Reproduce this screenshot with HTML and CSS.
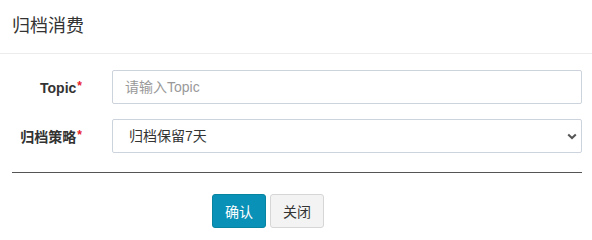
FILE: index.html
```html
<!DOCTYPE html>
<html lang="zh-CN">
<head>
<meta charset="utf-8">
<title>归档消费</title>
<link rel="stylesheet" href="styles.css">
</head>
<body>
<div class="dialog">
  <div class="dialog-header">
    <h3 class="dialog-title">归档消费</h3>
  </div>
  <form class="dialog-body">
    <div class="form-row">
      <label class="form-label">Topic<span class="req">*</span></label>
      <input class="form-control" type="text" placeholder="请输入Topic">
    </div>
    <div class="form-row">
      <label class="form-label">归档策略<span class="req">*</span></label>
      <div class="select-wrap">
        <select class="form-control form-select">
          <option>归档保留7天</option>
        </select>
        <svg class="select-arrow" width="10" height="7" viewBox="0 0 10 7"><path d="M1.2 1.4 L5 5 L8.8 1.4" fill="none" stroke="#555" stroke-width="2"/></svg>
      </div>
    </div>
    <div class="divider"></div>
    <div class="actions">
      <button type="button" class="btn btn-primary">确认</button>
      <button type="button" class="btn btn-default">关闭</button>
    </div>
  </form>
</div>
</body>
</html>
```
FILE: styles.css
```css
* { box-sizing: border-box; }
html, body { margin: 0; padding: 0; background: #fff; }
body {
  font-family: "Liberation Sans", "Noto Sans CJK SC", sans-serif;
  font-size: 14px;
  color: #333;
}
.dialog { width: 592px; }
.dialog-header {
  height: 54px;
  padding: 0 12px;
  display: flex;
  align-items: center;
  border-bottom: 1px solid #ececec;
}
.dialog-title {
  margin: 0;
  font-size: 18px;
  font-weight: normal;
  color: #333;
  line-height: 1;
  padding-bottom: 1px;
}
.dialog-body {
  padding: 16px 10px 0 12px;
  display: flex;
  flex-direction: column;
}
.form-row {
  display: flex;
  align-items: center;
  margin-bottom: 15px;
}
.form-label {
  width: 70px;
  margin-right: 30px;
  text-align: right;
  font-weight: bold;
  color: #333;
  font-size: 14px;
  white-space: nowrap;
}
.req {
  color: #e8202a;
  font-size: 12px;
  vertical-align: 3px;
  margin-left: 1px;
}
.form-control {
  flex: 1;
  height: 34px;
  border: 1px solid #cdd3dc;
  border-radius: 2px;
  padding: 0 12px;
  font-family: inherit;
  font-size: 14px;
  color: #333;
  background: #fff;
  outline: none;
}
.form-control::placeholder { color: #999; }
.select-wrap {
  flex: 1;
  position: relative;
  display: flex;
}
.form-select {
  appearance: none;
  -webkit-appearance: none;
  padding-left: 16px;
}
.select-arrow {
  position: absolute;
  right: 5px;
  top: 14px;
}
.divider {
  height: 1px;
  background: #555;
  margin: 4px 0 21px;
}
.actions {
  display: flex;
  gap: 4px;
  padding-left: 200px;
}
.btn {
  width: 54px;
  height: 34px;
  border-radius: 3px;
  font-family: inherit;
  font-size: 14px;
  padding: 0;
  cursor: pointer;
}
.btn-primary {
  background: #0a91b8;
  border: 1px solid #07849f;
  color: #fff;
}
.btn-default {
  background: #f3f3f3;
  border: 1px solid #d6d6d6;
  color: #333;
}
```
